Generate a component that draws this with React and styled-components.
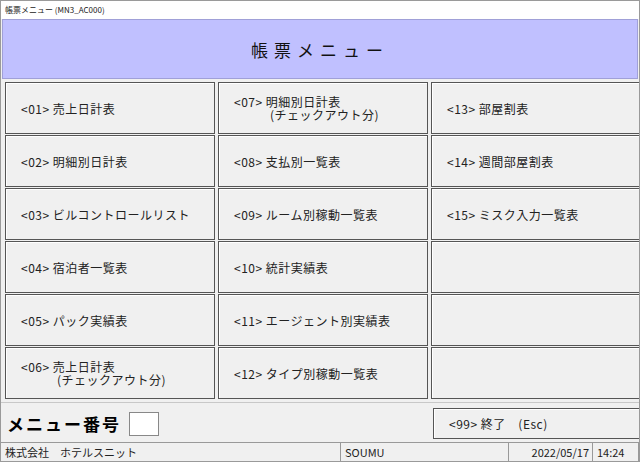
import styled, {createGlobalStyle} from 'styled-components';

const Global = createGlobalStyle`
  body { margin: 0; font-family: "Noto Sans CJK JP", sans-serif; }
`;

const Window = styled.div`
  width: 640px;
  height: 462px;
  background: #f0f0f0;
  display: flex;
  flex-direction: column;
  overflow: hidden;
  box-sizing: border-box;
  border: 1px solid #9a9a9a;
`;
const TitleBar = styled.div`
  height: 18px;
  background: #fff;
  font-size: 8px;
  line-height: 18px;
  padding-left: 4px;
  color: #222;
`;
const Header = styled.div`
  height: 58px;
  margin: 0 1px;
  background: #c0c0ff;
  border: 1px solid #a0a0d8;
  display: flex;
  align-items: center;
  justify-content: center;
  font-size: 17px;
  letter-spacing: 6px;
  color: #111;
`;
const Grid = styled.div`
  display: grid;
  grid-template-columns: 210px 210px 209px;
  grid-auto-rows: 52px;
  gap: 1px 3px;
  padding: 3px 3px 3px 4px;
  border-bottom: 1px solid #c8c8c8;
`;
const MenuButton = styled.div`
  box-sizing: border-box;
  border: 1px solid #555;
  box-shadow: inset 1px 1px 0 #fff;
  background: #f0f0f0;
  display: flex;
  align-items: center;
  padding-left: 15px;
  font-size: 12px;
  line-height: 13px;
  color: #222;
  letter-spacing: 0.5px;
`;
const Label = styled.div`
  display: flex;
  flex-direction: column;
`;
const SubLine = styled.span`
  padding-left: 36px;
`;
const Bottom = styled.div`
  flex: 1;
  display: grid;
  grid-template-columns: 423px 208px;
  gap: 3px;
  padding: 5px 3px 3px 6px;
`;
const NumberBox = styled.div`
  display: flex;
  align-items: center;
  gap: 8px;
  font-size: 17px;
  font-weight: bold;
  letter-spacing: 2px;
`;
const Input = styled.div`
  width: 28px;
  height: 22px;
  background: #fff;
  border: 1px solid #888;
`;
const Status = styled.div`
  height: 18px;
  display: flex;
  font-size: 11px;
  line-height: 18px;
  border-top: 1px solid #999;
  color: #222;
`;
const Cell = styled.div`
  width: ${p => p.$w}px;
  padding: 0 ${p => (p.$right ? 3 : 0)}px 0 4px;
  border-right: 1px solid #999;
  box-sizing: border-box;
  white-space: nowrap;
  text-align: ${p => (p.$right ? 'right' : 'left')};
`;

const items = [
  ['<01> 売上日計表'], ['<07> 明細別日計表', '(チェックアウト分)'], ['<13> 部屋割表'],
  ['<02> 明細別日計表'], ['<08> 支払別一覧表'], ['<14> 週間部屋割表'],
  ['<03> ビルコントロールリスト'], ['<09> ルーム別稼動一覧表'], ['<15> ミスク入力一覧表'],
  ['<04> 宿泊者一覧表'], ['<10> 統計実績表'], [''],
  ['<05> パック実績表'], ['<11> エージェント別実績表'], [''],
  ['<06> 売上日計表', '(チェックアウト分)'], ['<12> タイプ別稼動一覧表'], [''],
];

const App = () => (
  <Window>
    <Global />
    <TitleBar>帳票メニュー (MN3_AC000)</TitleBar>
    <Header>帳票メニュー</Header>
    <Grid>
      {items.map(([t, sub], i) => (
        <MenuButton key={i}>
          <Label>
            <span>{t}</span>
            {sub && <SubLine>{sub}</SubLine>}
          </Label>
        </MenuButton>
      ))}
    </Grid>
    <Bottom>
      <NumberBox>メニュー番号<Input /></NumberBox>
      <MenuButton>{'<99> 終了　(Esc)'}</MenuButton>
    </Bottom>
    <Status>
      <Cell $w={340}>株式会社　ホテルスニット</Cell>
      <Cell $w={168}>SOUMU</Cell>
      <Cell $w={84} $right>2022/05/17</Cell>
      <Cell $w={46}>14:24</Cell>
    </Status>
  </Window>
);

export default App;
